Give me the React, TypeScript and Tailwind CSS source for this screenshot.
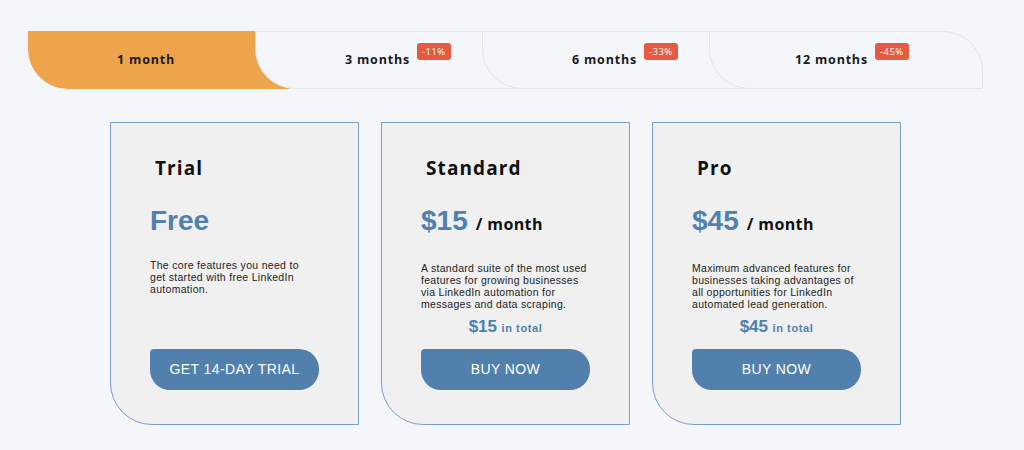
import React from 'react';

const tabs = [
  { label: '1 month', badge: '' },
  { label: '3 months', badge: '-11%' },
  { label: '6 months', badge: '-33%' },
  { label: '12 months', badge: '-45%' },
];

const plans = [
  {
    name: 'Trial',
    price: 'Free',
    perMonth: false,
    text: 'The core features you need to get started with free LinkedIn automation.',
    total: '',
    cta: 'GET 14-DAY TRIAL',
  },
  {
    name: 'Standard',
    price: '$15',
    perMonth: true,
    text: 'A standard suite of the most used features for growing businesses via LinkedIn automation for messages and data scraping.',
    total: '$15',
    cta: 'BUY NOW',
  },
  {
    name: 'Pro',
    price: '$45',
    perMonth: true,
    text: 'Maximum advanced features for businesses taking advantages of all opportunities for LinkedIn automated lead generation.',
    total: '$45',
    cta: 'BUY NOW',
  },
];

function Tab({ label, badge, index }: { label: string; badge: string; index: number }) {
  const active = index === 0;
  const last = index === tabs.length - 1;
  const base = 'h-full flex items-center shrink-0 rounded-bl-[40px]';
  const cls = active
    ? `${base} w-[262px] bg-[#eea44a]`
    : `${base} -ml-[35px] bg-[#f5f6fa] border border-[#e3e4e9] ${last ? 'w-[274px] rounded-tr-[40px]' : 'w-[262px]'}`;

  return (
    <div className={cls}>
      <div className={`flex justify-center ${active ? 'w-[236px]' : 'w-[243px]'}`}>
        <span className="relative text-[12.5px] leading-[18px] font-bold tracking-[0.8px] text-[#1a1a1a] font-['Open_Sans',sans-serif]">
          {label}
          {badge && (
            <span className="absolute left-[calc(100%+7px)] top-[-8px] h-[17px] px-[5px] rounded-[3px] bg-[#e65a40] text-white text-[9.5px] leading-[17px] font-normal tracking-[0.5px] whitespace-nowrap">
              {badge}
            </span>
          )}
        </span>
      </div>
    </div>
  );
}

function PlanCard({ plan }: { plan: (typeof plans)[number] }) {
  return (
    <div className="w-[249px] h-[303px] flex flex-col border border-[#7aa0c9] bg-[#f0f0f0] rounded-bl-[42px]">
      <h2 className="mt-[33px] pl-[44px] text-[19px] leading-[24px] font-bold tracking-[1.1px] text-[#111] font-['Open_Sans',sans-serif]">
        {plan.name}
      </h2>
      <div className="mt-[25px] pl-[39px] flex items-baseline gap-[8px] leading-[32px]">
        <span className="text-[28px] font-bold text-[#4f80af] font-['Liberation_Sans',Arial,sans-serif]">
          {plan.price}
        </span>
        {plan.perMonth && (
          <span className="text-[16px] font-bold tracking-[0.4px] text-[#111] font-['Open_Sans',sans-serif]">
            / month
          </span>
        )}
      </div>
      <p className="mt-[22px] ml-[39px] w-[166px] h-[48px] text-[10.5px] leading-[12px] tracking-[0.3px] text-[#222] font-['Liberation_Sans',Arial,sans-serif]">
        {plan.text}
      </p>
      {plan.total && (
        <div className="mt-[7px] text-center leading-[20px] text-[#4f80af] font-bold font-['Liberation_Sans',Arial,sans-serif]">
          <span className="text-[17px]">{plan.total}</span>{' '}
          <span className="text-[11px] tracking-[0.6px]">in total</span>
        </div>
      )}
      <button className="mt-auto mb-[34px] ml-[39px] w-[169px] h-[41px] bg-[#5180ac] text-white text-[14px] tracking-[0.4px] rounded-[20px] rounded-tl-[4px] font-['Liberation_Sans',Arial,sans-serif]">
        {plan.cta}
      </button>
    </div>
  );
}

export default function App() {
  return (
    <div className="w-full h-[450px] bg-[#f5f6fa] pt-[31px]">
      <div className="ml-[28px] flex h-[58px]">
        {tabs.map((t, i) => (
          <Tab key={t.label} label={t.label} badge={t.badge} index={i} />
        ))}
      </div>
      <div className="ml-[110px] mt-[33px] flex gap-[22px]">
        {plans.map((p) => (
          <PlanCard key={p.name} plan={p} />
        ))}
      </div>
    </div>
  );
}
